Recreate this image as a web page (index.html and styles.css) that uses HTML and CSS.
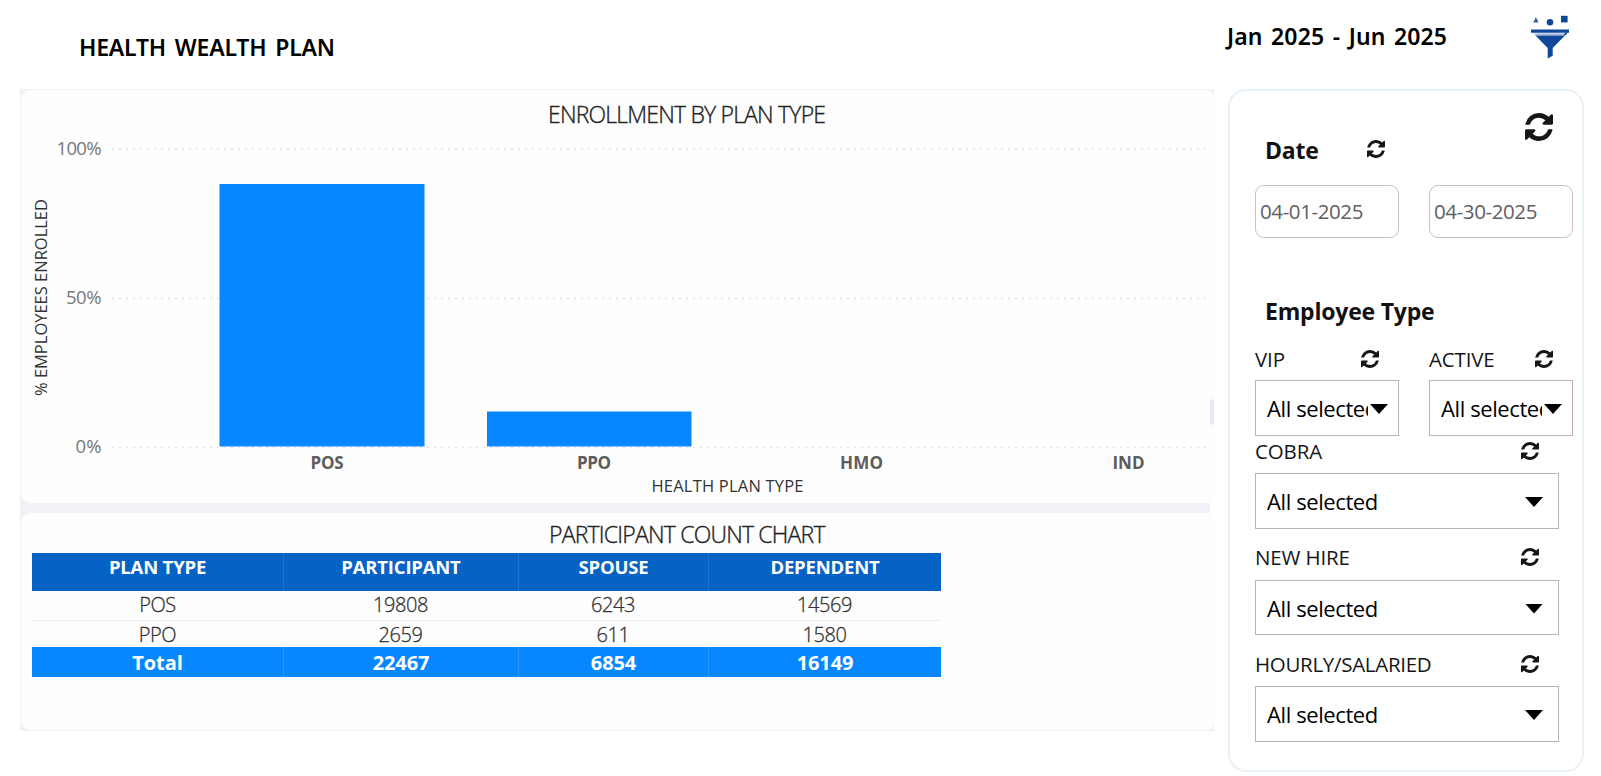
FILE: index.html
```
<!DOCTYPE html>
<html lang="en">
<head>
<meta charset="utf-8">
<title>Health Wealth Plan</title>
<link rel="stylesheet" href="styles.css">
</head>
<body>
<svg width="0" height="0" class="defs">
  <symbol id="refresh" viewBox="0 0 1536 1536"><path d="M1511 928q0 5-1 7-64 268-268 434.500T764 1536q-146 0-282.500-55T238 1324l-129 129q-19 19-45 19t-45-19-19-45V960q0-26 19-45t45-19h448q26 0 45 19t19 45-19 45l-137 137q71 66 161 102t187 36q134 0 250-65t186-179q11-17 53-117 8-23 30-23h192q13 0 22.500 9.500t9.500 22.500zm25-800v448q0 26-19 45t-45 19h-448q-26 0-45-19t-19-45 19-45l138-138Q969 256 768 256q-134 0-250 65T332 500q-11 17-53 117-8 23-30 23H50q-13 0-22.500-9.500T18 608v-7q65-268 270-434.500T768 0q146 0 284 55.500T1297 212l130-129q19-19 45-19t45 19 19 45z"/></symbol>
</svg>
<div class="page">
  <header class="top">
    <h1 class="title">HEALTH WEALTH PLAN</h1>
    <div class="period">Jan 2025 - Jun 2025</div>
    <svg class="funnel" viewBox="0 0 40 44" width="40" height="44">
      <path d="M3.300 7.500 5.900 2 8.500 7.500z" opacity=".85"/><circle cx="20" cy="7.200" r="3.300"/><path d="M31 .800h6.600v6.600H31z"/>
      <path d="M1 14.600h38v3.200H1z"/><path d="M4 18.400h31l-1.500 1.800H5.500z" fill="#9db2d6"/><path d="M35 17.800h3l-3 2.800h-1.500z"/>
      <path d="M5.500 20.400h29.500L22.700 33v7.700L17.700 43.500V33z"/>
    </svg>
  </header>
  <main class="main">
    <section class="board">
      <article class="card chart">
        <svg class="plot" width="1193" height="413" viewBox="21 90 1193 413">
          <g class="grid"><path d="M112 149H1209M112 298.500H1209M112 447.500H1209"/></g>
          <text class="heading" x="548" y="123" textLength="278">ENROLLMENT BY PLAN TYPE</text>
          <g class="ticks"><text x="56.500" y="154.500" textLength="45">100%</text><text x="66" y="304" textLength="35.500">50%</text><text x="75.500" y="453" textLength="26">0%</text></g>
          <path class="bar" d="M219.500 184h205v262.500h-205zM487 411.500h204.500v35H487z"/>
          <g class="cats"><text x="310.500" y="469" textLength="33">POS</text><text x="577" y="469" textLength="34">PPO</text><text x="840" y="469" textLength="43">HMO</text><text x="1112.500" y="469" textLength="32">IND</text></g>
          <text class="axis" x="651.500" y="492" textLength="152">HEALTH PLAN TYPE</text>
          <text class="axis" transform="translate(47 396) rotate(-90)" textLength="197">% EMPLOYEES ENROLLED</text>
        </svg>
      </article>
      <article class="card counts">
        <h2 class="heading">PARTICIPANT COUNT CHART</h2>
        <table class="table">
          <colgroup><col class="c1"><col class="c2"><col class="c3"><col class="c4"></colgroup>
          <thead><tr><th>PLAN TYPE</th><th>PARTICIPANT</th><th>SPOUSE</th><th>DEPENDENT</th></tr></thead>
          <tbody>
            <tr><td>POS</td><td>19808</td><td>6243</td><td>14569</td></tr>
            <tr><td>PPO</td><td>2659</td><td>611</td><td>1580</td></tr>
          </tbody>
          <tfoot><tr><td>Total</td><td>22467</td><td>6854</td><td>16149</td></tr></tfoot>
        </table>
      </article>
      <span class="handle"></span>
    </section>
    <aside class="filters">
      <div class="date-head"><h3>Date</h3><svg class="ico date-ico"><use href="#refresh"/></svg><svg class="ico all-ico"><use href="#refresh"/></svg></div>
      <div class="pair"><div class="date">04-01-2025</div><div class="date">04-30-2025</div></div>
      <h3 class="emp">Employee Type</h3>
      <div class="pair">
        <div class="field"><div class="label"><span>VIP</span><svg class="ico"><use href="#refresh"/></svg></div><div class="select"><span>All selected</span><i></i></div></div>
        <div class="field"><div class="label"><span>ACTIVE</span><svg class="ico"><use href="#refresh"/></svg></div><div class="select"><span>All selected</span><i></i></div></div>
      </div>
      <div class="field wide cobra"><div class="label"><span>COBRA</span><svg class="ico"><use href="#refresh"/></svg></div><div class="select"><span>All selected</span><i></i></div></div>
      <div class="field wide hire"><div class="label"><span>NEW HIRE</span><svg class="ico"><use href="#refresh"/></svg></div><div class="select"><span>All selected</span><i></i></div></div>
      <div class="field wide hourly"><div class="label"><span>HOURLY/SALARIED</span><svg class="ico"><use href="#refresh"/></svg></div><div class="select"><span>All selected</span><i></i></div></div>
    </aside>
  </main>
</div>
</body>
</html>
```
FILE: styles.css
```
* { box-sizing: border-box; }
body { margin: 0; background: #fff; color: #111; font-family: "Open Sans", "Noto Sans", sans-serif; }
h1, h2, h3 { margin: 0; font-weight: 700; }
.defs { display: block; }
.page { width: 1601px; height: 776px; overflow: hidden; }

.top { display: flex; align-items: flex-start; height: 89px; padding-left: 79px; color: #000; white-space: nowrap; }
.title { width: 1148px; padding-top: 32px; font: 600 23px/30px "Noto Sans", sans-serif; letter-spacing: -0.2px; word-spacing: 3px; }
.period { width: 303px; padding-top: 21px; font: 600 23px/30px "Noto Sans", sans-serif; letter-spacing: 0.1px; word-spacing: 2.500px; }
.funnel { margin-top: 15px; fill: #0f4799; }

.main { display: flex; align-items: flex-start; padding-left: 20px; gap: 14px; }
.board { position: relative; width: 1194px; height: 642px; padding: 1px 0 1px 1px; background: linear-gradient(#fefefe, #fefefe) right 20px / 4px 602px no-repeat, #f2f1f8; display: flex; flex-direction: column; gap: 10px; }
.board > .card { flex: none; }
.card { background: #fefefe; border-radius: 10px 0 0 10px; overflow: hidden; }
.chart { height: 413px; border-top-right-radius: 8px; }
.counts { height: 217px; border-bottom-right-radius: 8px; padding: 6px 0 0 11px; }
.handle { position: absolute; right: 0; top: 310px; width: 4px; height: 26px; background: #e9e8f5; border-radius: 4px 0 0 4px; }

.plot { display: block; }
.plot text { font-family: "Open Sans", sans-serif; }
.grid { stroke: #e2e2e2; stroke-width: 1.500px; stroke-dasharray: 2 5; fill: none; }
.bar { fill: #0787ff; }
.heading { font-size: 23px; font-weight: 300; fill: #222; color: #222; -webkit-text-stroke: 0.35px #222; }
.plot .heading { stroke: #222; stroke-width: 0.35px; }
.ticks { font-size: 18.500px; fill: #777; }
.cats { font-size: 17px; font-weight: 700; fill: #5c5c5c; }
.axis { font-size: 16.500px; fill: #333; }

.counts .heading { width: 1180px; padding-left: 517px; line-height: 30px; margin-bottom: 4px; white-space: nowrap; letter-spacing: -0.8px; }
.table { table-layout: fixed; width: 909px; border-collapse: separate; border-spacing: 0; text-align: center; }
.c1 { width: 251px; } .c2 { width: 235px; } .c3 { width: 190px; } .c4 { width: 233px; }
.table th, .table td { padding: 0; }
.table th { height: 38px; padding-bottom: 10px; background: #0563c6; color: #fff; font-size: 18.500px; font-weight: 700; line-height: 28px; letter-spacing: -0.2px; }
.table th + th { border-left: 1px solid #2274cd; }
.table tbody td { height: 26px; padding-top: 2px; color: #333; font-size: 20px; font-weight: 300; line-height: 24px; letter-spacing: -0.4px; -webkit-text-stroke: 0.3px #333; }
.table tbody tr:first-child td { height: 30px; padding: 1px 0 2px; line-height: 26px; border-bottom: 1px solid #eee; }
.table tfoot td { height: 30px; padding-top: 2px; background: #0787ff; color: #fff; font-size: 20px; font-weight: 700; line-height: 28px; letter-spacing: -0.1px; }
.table tfoot td + td { border-left: 1px solid #2a97ff; }

.filters { width: 356px; height: 683px; padding-left: 25px; border: 2px solid #e8f1f8; border-radius: 18px; background: #fff; }
.date-head { display: flex; height: 94px; padding: 44px 0 0 10px; }
h3 { font-size: 23px; line-height: 30px; color: #111; letter-spacing: -0.2px; white-space: nowrap; }
.ico { width: 18px; height: 18px; fill: #161616; display: block; flex: none; }
.date-head h3 { width: 102px; }
.date-ico { margin-top: 5px; }
.all-ico { width: 28px; height: 28px; margin: -22px 0 0 140px; }
.pair { display: grid; grid-template-columns: 144px 144px; gap: 30px; }
.date { height: 53px; padding: 0 0 0 4px; border: 1.500px solid #cbc0bf; border-radius: 9px; font-size: 20.500px; line-height: 50px; color: #606060; letter-spacing: -0.4px; }
.emp { margin: 58px 0 19px 10px; }
.label { display: flex; align-items: center; justify-content: space-between; height: 28px; margin-bottom: 7px; padding-right: 20px; font-size: 20.500px; line-height: 28px; white-space: nowrap; color: #161616; letter-spacing: -0.15px; }
.select { display: flex; align-items: center; justify-content: space-between; height: 56px; padding: 0 10px 0 11px; border: 1.500px solid #bfb3b2; color: #000; font-size: 22px; white-space: nowrap; letter-spacing: -0.4px; }
.select span { flex: 0 1 auto; min-width: 0; overflow: hidden; line-height: 34px; }
.select i { flex: none; width: 18px; height: 10px; margin: 2px 0 0 2px; background: #000; clip-path: polygon(0 0, 100% 0, 50% 100%); }
.wide { width: 304px; }
.wide .select { padding-right: 15px; }
.cobra { margin-top: 1px; } .cobra .label { height: 28px; margin-bottom: 8px; } .cobra .select { height: 56px; }
.hire { margin-top: 14px; } .hire .label { margin-bottom: 9px; } .hire .select { height: 55px; }
.hourly { margin-top: 15px; } .hourly .label { margin-bottom: 8px; letter-spacing: -0.3px; }
```
